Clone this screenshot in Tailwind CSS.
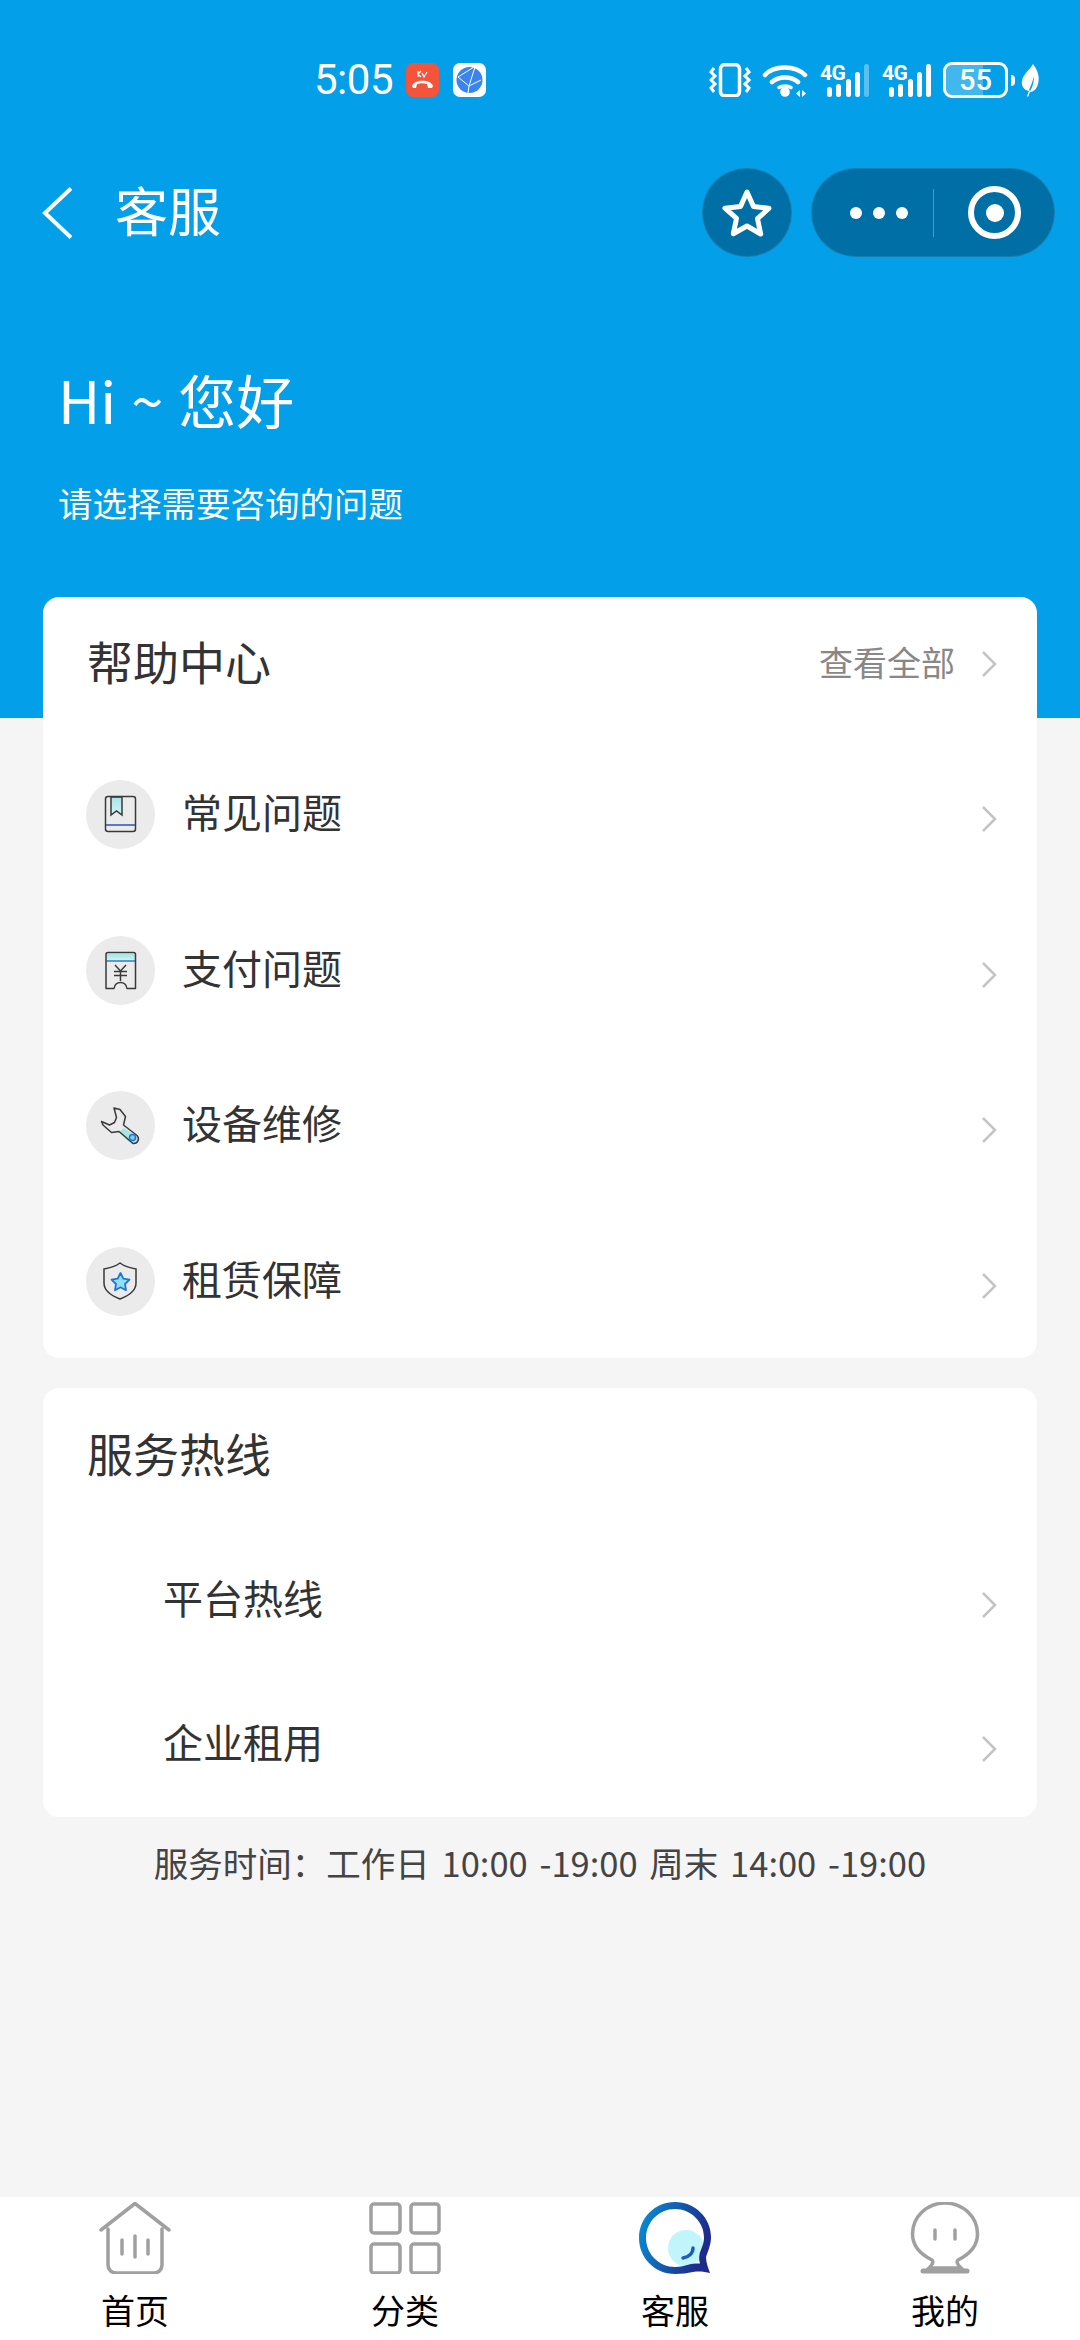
<!DOCTYPE html>
<html>
<head>
<meta charset="utf-8">
<title>客服</title>
<script src="https://cdn.jsdelivr.net/npm/@tailwindcss/browser@4"></script>
</head>
<body class="bg-[#f5f5f5]">
<div class="w-[1080px] h-[2340px] flex flex-col overflow-hidden font-['Noto_Sans_CJK_SC','Noto_Sans',sans-serif] text-[#333]">

  <!-- blue header -->
  <div class="h-[718px] shrink-0 bg-[#039fe8] text-white">
    <!-- status bar -->
    <div class="h-[168px] flex items-start pt-[63px] pl-[314px]">
      <span class="font-['Roboto',sans-serif] font-[450] text-[42px] leading-[34px] w-[81px] tracking-[-0.5px]">5:05</span>
      <svg class="ml-[11px]" width="33" height="34" viewBox="0 0 33 34"><rect width="33" height="34" rx="7" fill="#f4553a"/><path d="M12 8v6M12 11l3-3M12 11l3 3M16 10l2 4 3-5" stroke="#fff" stroke-width="1.200" fill="none"/><path d="M6 23c2-7 19-7 21 0l-1 2h-4l-1-4c-3-1-7-1-10 0l-1 4H7z" fill="#fff"/></svg>
      <svg class="ml-[14px]" width="33" height="34" viewBox="0 0 33 34"><rect width="33" height="34" rx="7" fill="#fff"/><circle cx="16.500" cy="17" r="13" fill="#3a84f0"/><path d="M5 14l16-10M5 14l11 9 6-19M16 23l-1 7M16 23l12-6" stroke="#fff" stroke-width="1" fill="none"/></svg>

      <div class="ml-[223px] flex items-start">
        <!-- vibrate -->
        <svg width="43" height="34" viewBox="0 0 43 34" fill="none" stroke="#fff"><rect x="11.500" y="1.700" width="19" height="31" rx="4" stroke-width="3.500"/><path d="M5 5L2 9l4 4-4 4 4 4-4 4 3 4M37 5l3 4-4 4 4 4-4 4 4 4-3 4" stroke-width="3"/></svg>
        <!-- wifi -->
        <svg class="ml-[10px]" width="46" height="34" viewBox="0 0 46 34" fill="none" stroke="#fff" stroke-width="4.500" stroke-linecap="round"><path d="M3 12C12 2 33 2 43 12M10 19c7-6 19-6 26 0"/><path d="M17 24.500c3-2 9-2 12 0" stroke-width="3.500"/><circle cx="23" cy="29" r="4.800" fill="#fff" stroke="none"/><path d="M38 27v7l-4-3.500zM40 27v7l4-3.500z" fill="#fff" stroke="none"/></svg>
        <!-- sim 1 -->
        <div class="ml-[11px] relative w-[51px] h-[34px]">
          <span class="absolute left-[1px] top-[1px] font-['Roboto',sans-serif] font-bold text-[21px] leading-[18px] tracking-[-0.5px]">4G</span>
          <svg class="absolute left-0 top-0" width="51" height="34" viewBox="0 0 51 34"><rect x="8" y="24" width="5" height="10" rx="2.500" fill="#fff"/><rect x="17" y="21" width="5" height="13" rx="2.500" fill="#fff"/><rect x="27" y="16" width="5" height="18" rx="2.500" fill="#fff"/><rect x="36" y="9" width="5" height="25" rx="2.500" fill="#fff"/><rect x="45" y="1" width="5" height="33" rx="2.500" fill="#fff" fill-opacity="0.35"/></svg>
        </div>
        <!-- sim 2 -->
        <div class="ml-[11px] relative w-[51px] h-[34px]">
          <span class="absolute left-[1px] top-[1px] font-['Roboto',sans-serif] font-bold text-[21px] leading-[18px] tracking-[-0.5px]">4G</span>
          <svg class="absolute left-0 top-0" width="51" height="34" viewBox="0 0 51 34"><rect x="8" y="24" width="5" height="10" rx="2.500" fill="#fff"/><rect x="17" y="21" width="5" height="13" rx="2.500" fill="#fff"/><rect x="27" y="16" width="5" height="18" rx="2.500" fill="#fff"/><rect x="36" y="9" width="5" height="25" rx="2.500" fill="#fff"/><rect x="45" y="1" width="5" height="33" rx="2.500" fill="#fff"/></svg>
        </div>
        <!-- battery -->
        <div class="ml-[11px] w-[65px] h-[36px] -mt-[1px] border-[3px] border-white rounded-[9px] relative overflow-hidden flex items-center justify-center">
          <div class="absolute left-0 top-0 bottom-0 w-[62%] bg-white/25"></div>
          <span class="relative font-['Roboto',sans-serif] font-medium text-[29px] leading-[30px]">55</span>
        </div>
        <div class="ml-[3px] mt-[12px] w-[4px] h-[11px] rounded-r-sm bg-white"></div>
        <svg class="ml-[5px]" width="20" height="34" viewBox="0 0 20 34"><path d="M13 1c5 7 7 13 5 20-1 5-5 8-8 8l-2 5-1-1 2-5C4 27 1 23 2 18 3 11 9 8 13 1zM10 28c3-5 4-9 4-15-1 5-3 9-5 14z" fill="#fff" fill-rule="evenodd"/></svg>
      </div>
    </div>

    <!-- nav -->
    <div class="h-[89px] flex items-center pl-[42px] pr-[25px]">
      <svg width="30" height="52" viewBox="0 0 30 52" fill="none" stroke="#fff" stroke-width="4"><path d="M29 1.500L3 26l26 24.500"/></svg>
      <span class="ml-[43px] pb-[6px] text-[53px] leading-[83px]">客服</span>
      <div class="ml-auto w-[90px] h-[89px] rounded-full bg-[#006fa6] border border-white/10 flex items-center justify-center">
        <svg width="50" height="48" viewBox="0 0 50 48" fill="none" stroke="#fff" stroke-width="5" stroke-linejoin="round"><path d="M25 3l6.500 14.500 15.500 1.700-11.500 10.500 3.200 15.300L25 37l-13.700 7.700 3.200-15.300L3 19.200l15.500-1.700z"/></svg>
      </div>
      <div class="ml-[19px] w-[244px] h-[89px] rounded-full bg-[#006fa6] border border-white/10 flex items-center">
        <div class="ml-[38px] flex gap-[11px]">
          <span class="w-[12px] h-[12px] rounded-full bg-white"></span>
          <span class="w-[12px] h-[12px] rounded-full bg-white"></span>
          <span class="w-[12px] h-[12px] rounded-full bg-white"></span>
        </div>
        <div class="ml-[25px] w-px h-[48px] bg-white/30"></div>
        <div class="ml-[34px] w-[53px] h-[53px] rounded-full border-[6px] border-white flex items-center justify-center">
          <span class="w-[18px] h-[18px] rounded-full bg-white"></span>
        </div>
      </div>
    </div>

    <!-- greeting -->
    <div class="pl-[58px] pt-[102px]">
      <div class="text-[58px] leading-[80px] [word-spacing:2px]">Hi ~ 您好</div>
      <div class="mt-[40px] text-[34.500px] leading-[46px]">请选择需要咨询的问题</div>
    </div>
  </div>

  <!-- help center card -->
  <div class="mx-[43px] w-[994px] h-[761px] -mt-[121px] shrink-0 bg-white rounded-[16px] relative">
    <div class="h-[126px] pl-[44px] pr-[40px] flex items-center">
      <span class="text-[46px] leading-[60px]">帮助中心</span>
      <span class="ml-auto mt-[3px] text-[34px] leading-[46px] text-[#888]">查看全部</span>
      <svg class="ml-[26px] mt-[8px]" width="16" height="28" viewBox="0 0 16 28" fill="none" stroke="#c4c4c4" stroke-width="2.500"><path d="M2 2l12 12L2 26"/></svg>
    </div>
    <div class="pt-[14px]">
      <div class="h-[155.500px] pl-[43px] pr-[40px] flex items-center">
        <div class="w-[69px] h-[69px] rounded-full bg-[#ebebeb]">
          <svg width="69" height="69" viewBox="0 0 69 69" fill="none"><defs><linearGradient id="tl" x1="0" y1="0" x2="0" y2="1"><stop offset="0" stop-color="#a5e5e8"/><stop offset="1" stop-color="#d4f3f5"/></linearGradient></defs><path d="M25 17v18l5.500-4 5.500 4V17z" fill="url(#tl)" stroke="#3a3a3a" stroke-width="1.500"/><rect x="19.500" y="16.500" width="30" height="35" rx="2.500" stroke="#3a3a3a" stroke-width="1.500"/><path d="M20 45h29" stroke="#2b4fc0" stroke-width="1.500"/></svg>
        </div>
        <span class="ml-[27px] pb-[7px] text-[40px] leading-[56px]">常见问题</span>
        <svg class="ml-auto mt-[9px]" width="16" height="28" viewBox="0 0 16 28" fill="none" stroke="#c4c4c4" stroke-width="2.500"><path d="M2 2l12 12L2 26"/></svg>
      </div>
      <div class="h-[155.500px] pl-[43px] pr-[40px] flex items-center">
        <div class="w-[69px] h-[69px] rounded-full bg-[#ebebeb]">
          <svg width="69" height="69" viewBox="0 0 69 69" fill="none"><path d="M21 18h28v7H21z" fill="url(#tl)"/><path d="M20.500 25h29" stroke="#2b7fc8" stroke-width="1.500"/><path d="M22.500 16.500h25a2 2 0 0 1 2 2v34h-8.500c-.5-3-2.500-6-6.500-6s-6 3-6.500 6h-8v-34a2 2 0 0 1 2-2z" stroke="#3a3a3a" stroke-width="1.500" stroke-linejoin="round"/><path d="M29 29l5.500 6 5.500-6M34.500 35v10M28 35.500h13M28 39.500h13" stroke="#3a3a3a" stroke-width="1.500"/></svg>
        </div>
        <span class="ml-[27px] pb-[7px] text-[40px] leading-[56px]">支付问题</span>
        <svg class="ml-auto mt-[9px]" width="16" height="28" viewBox="0 0 16 28" fill="none" stroke="#c4c4c4" stroke-width="2.500"><path d="M2 2l12 12L2 26"/></svg>
      </div>
      <div class="h-[155.500px] pl-[43px] pr-[40px] flex items-center">
        <div class="w-[69px] h-[69px] rounded-full bg-[#ebebeb]">
          <svg width="69" height="69" viewBox="0 0 69 69" fill="none"><path d="M38 37l12 8c3 3 1 8-3 8-3 0-11-9-14-12z" fill="#a5e5e8"/><path d="M28 17l6 1.500 5.500 7-2 8.500 13.500 10.500c3 3 1 8.500-4 8L33 40.500l-7.500 1-8.500-7.500-1.500-3.500 8 3.500 5-2.500 2-5z" stroke="#3a3a3a" stroke-width="1.500" stroke-linejoin="round"/><circle cx="46.500" cy="46.500" r="3" fill="#7fd0ee" stroke="#2b6fd0" stroke-width="1.500"/></svg>
        </div>
        <span class="ml-[27px] pb-[7px] text-[40px] leading-[56px]">设备维修</span>
        <svg class="ml-auto mt-[9px]" width="16" height="28" viewBox="0 0 16 28" fill="none" stroke="#c4c4c4" stroke-width="2.500"><path d="M2 2l12 12L2 26"/></svg>
      </div>
      <div class="h-[155.500px] pl-[43px] pr-[40px] flex items-center">
        <div class="w-[69px] h-[69px] rounded-full bg-[#ebebeb]">
          <svg width="69" height="69" viewBox="0 0 69 69" fill="none"><path d="M34 16c4 3 10 5 16 6v14c0 8-8 13-16 16-8-3-16-8-16-16V22c6-1 12-3 16-6z" stroke="#3a3a3a" stroke-width="1.500"/><path d="M34.500 26l2.800 5.700 6.200.9-4.500 4.400 1 6.200-5.500-3-5.500 3 1-6.200-4.500-4.400 6.200-.9z" fill="#8fe0f2" stroke="#1f74d8" stroke-width="1.800" stroke-linejoin="round"/></svg>
        </div>
        <span class="ml-[27px] pb-[7px] text-[40px] leading-[56px]">租赁保障</span>
        <svg class="ml-auto mt-[9px]" width="16" height="28" viewBox="0 0 16 28" fill="none" stroke="#c4c4c4" stroke-width="2.500"><path d="M2 2l12 12L2 26"/></svg>
      </div>
    </div>
  </div>

  <!-- hotline card -->
  <div class="mx-[43px] w-[994px] h-[429px] mt-[30px] shrink-0 bg-white rounded-[16px]">
    <div class="h-[128px] pl-[44px] flex items-center">
      <span class="text-[46px] leading-[60px]">服务热线</span>
    </div>
    <div class="h-[144px] mt-[12px] pl-[120px] pr-[40px] flex items-center">
      <span class="pb-[6px] text-[40px] leading-[56px]">平台热线</span>
      <svg class="ml-auto mt-[9px]" width="16" height="28" viewBox="0 0 16 28" fill="none" stroke="#c4c4c4" stroke-width="2.500"><path d="M2 2l12 12L2 26"/></svg>
    </div>
    <div class="h-[144px] pl-[120px] pr-[40px] flex items-center">
      <span class="pb-[6px] text-[40px] leading-[56px]">企业租用</span>
      <svg class="ml-auto mt-[9px]" width="16" height="28" viewBox="0 0 16 28" fill="none" stroke="#c4c4c4" stroke-width="2.500"><path d="M2 2l12 12L2 26"/></svg>
    </div>
  </div>

  <div class="mt-[22px] text-center text-[34.500px] leading-[46px] text-[#444] [word-spacing:4px]">服务时间：工作日 10:00 -19:00 周末 14:00 -19:00</div>

  <!-- tab bar -->
  <div class="mt-auto h-[143px] shrink-0 bg-white grid grid-cols-4 text-black">
    <div class="flex flex-col items-center pt-[5px]">
      <svg width="72" height="72" viewBox="0 0 72 72" fill="none" stroke="#a0a0a0" stroke-width="3.500" stroke-linecap="round" stroke-linejoin="round"><path d="M2 28L36 1.500 70 28M9 27v36a8 8 0 0 0 8 8h38a8 8 0 0 0 8-8V27M23 38v14M36 34v21M49 38v14"/></svg>
      <div class="mt-[13px] text-[34px] leading-[46px]">首页</div>
    </div>
    <div class="flex flex-col items-center pt-[5px]">
      <svg width="72" height="72" viewBox="0 0 72 72" fill="none" stroke="#a0a0a0" stroke-width="3.500"><rect x="2" y="2" width="29" height="29" rx="3"/><rect x="42" y="2" width="28" height="29" rx="3"/><rect x="2" y="42" width="29" height="29" rx="3"/><rect x="42" y="42" width="28" height="29" rx="3"/></svg>
      <div class="mt-[13px] text-[34px] leading-[46px]">分类</div>
    </div>
    <div class="flex flex-col items-center pt-[5px]">
      <svg width="72" height="72" viewBox="0 0 72 72" fill="none"><defs><linearGradient id="cs" x1="0" y1="0" x2="1" y2="0.300"><stop offset="0" stop-color="#0594dc"/><stop offset="1" stop-color="#1f2a8a"/></linearGradient></defs><circle cx="47" cy="46" r="18" fill="#bff5fb"/><path d="M54 46c0 5-4 9-10 10" stroke="#1b5cc0" stroke-width="3.500" stroke-linecap="round"/><path d="M36 0c20 0 36 16 36 35 0 8-3 14-5 20 0 5 2 11 4 16-5-1-10-2-17-1-6 1-11 2-18 2C16 72 0 56 0 36S16 0 36 0zm0 7C20 7 7 20 7 36s13 29 29 29c6 0 11-2 16-3 3-.5 7-.5 9-.5-1-3-1-6-.5-9 1-5 4.500-10 4.500-17C65 20 52 7 36 7z" fill="url(#cs)" fill-rule="evenodd"/></svg>
      <div class="mt-[13px] text-[34px] leading-[46px]">客服</div>
    </div>
    <div class="flex flex-col items-center pt-[5px]">
      <svg width="72" height="72" viewBox="0 0 72 72" fill="none" stroke="#a0a0a0" stroke-width="3.500" stroke-linecap="round"><path d="M23 58C11 52 3.500 43 3.500 32a32.500 31 0 0 1 65 0c0 11-7.500 20-19.500 26-2 2 0 5 3 8H20c3-3 5-6 3-8z"/><path d="M14 69h44" stroke-width="5"/><path d="M26 28v9M46 28v9"/></svg>
      <div class="mt-[13px] text-[34px] leading-[46px]">我的</div>
    </div>
  </div>
</div>
</body>
</html>
